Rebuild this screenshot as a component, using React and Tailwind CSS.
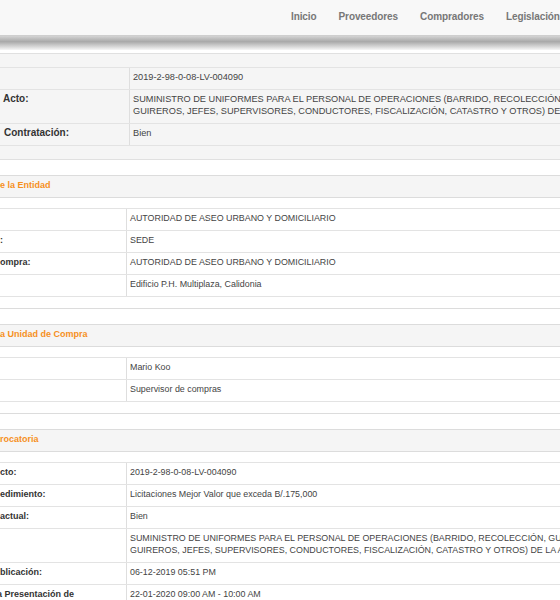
import React from "react";

const LONG1 =
  "SUMINISTRO DE UNIFORMES PARA EL PERSONAL DE OPERACIONES (BARRIDO, RECOLECCIÓN, GUARDIAS,";
const LONG2 =
  "GUIREROS, JEFES, SUPERVISORES, CONDUCTORES, FISCALIZACIÓN, CATASTRO Y OTROS) DE LA AAUD.";

function Row({
  label,
  labelPad = "pl-0",
  value,
  lines,
  labelW = "w-[127px]",
  valuePad = "pl-[3px]",
  labelSize = "text-[9px]",
  valueSize = "text-[8.9px]",
}) {
  return (
    <div className="flex border-t border-[#e3e3e3]">
      <div
        className={`${labelW} shrink-0 border-r border-[#dedede] pt-[3px] pb-[6px] ${labelPad} ${labelSize} leading-[12px] font-bold text-[#333] whitespace-nowrap overflow-hidden`}
      >
        {label || "\u00a0"}
      </div>
      <div
        className={`flex-1 min-w-0 pt-[3px] pb-[6px] ${valuePad} ${valueSize} leading-[12px] text-[#444] whitespace-nowrap overflow-hidden`}
      >
        {lines ? lines.map((l, i) => <div key={i}>{l}</div>) : value}
      </div>
    </div>
  );
}

function Panel({ title, children }) {
  return (
    <div className="border-t border-b border-[#dcdcdc] mb-[15px]">
      <div className="h-[22px] pb-[1px] bg-[#f5f5f5] border-b border-[#dcdcdc] flex items-center text-[9px] font-bold text-[#f5901e] whitespace-nowrap">
        {title}
      </div>
      <div className="pt-[10px] pb-[11px] bg-white">
        <div className="border-b border-[#e3e3e3]">{children}</div>
      </div>
    </div>
  );
}

export default function App() {
  return (
    <div className="w-[560px] h-[600px] overflow-hidden bg-white font-['Liberation_Sans',Arial,sans-serif]">
      {/* Navbar */}
      <div className="h-[36px] pb-[3px] bg-[#f8f8f8] border-b border-[#cfcfcf] flex items-center pl-[280px] whitespace-nowrap">
        {["Inicio", "Proveedores", "Compradores", "Legislación"].map((t) => (
          <span key={t} className="px-[11px] text-[10px] font-bold text-[#777] tracking-[-0.1px]">
            {t}
          </span>
        ))}
      </div>
      <div className="h-[14px] bg-linear-to-b from-[#d4d4d4] via-[#a9a9a9] via-40% to-[#f7f7f7]" />
      <div className="h-[3px]" />

      {/* Section 1 */}
      <div className="border-t border-b border-[#e0e0e0] bg-[#f5f5f5] pt-[13px] pb-[13px] mb-[15px]">
        <div className="border-b border-[#e3e3e3]">
          <Row
            labelW="w-[130px]"
            labelSize="text-[10px]"
            valueSize="text-[9.2px]"
            value="2019-2-98-0-08-LV-004090"
          />
          <Row
            labelW="w-[130px]"
            labelSize="text-[10px]"
            valueSize="text-[9.2px]"
            label="Acto:"
            labelPad="pl-[3px]"
            lines={[LONG1, LONG2]}
          />
          <Row
            labelW="w-[130px]"
            labelSize="text-[10px]"
            valueSize="text-[9.2px]"
            label="Contratación:"
            labelPad="pl-[4px]"
            value="Bien"
          />
        </div>
      </div>

      <Panel title="e la Entidad">
        <Row value="AUTORIDAD DE ASEO URBANO Y DOMICILIARIO" />
        <Row label=":" value="SEDE" />
        <Row label="ompra:" value="AUTORIDAD DE ASEO URBANO Y DOMICILIARIO" />
        <Row value="Edificio P.H. Multiplaza, Calidonia" />
      </Panel>

      <Panel title="a Unidad de Compra">
        <Row value="Mario Koo" />
        <Row value="Supervisor de compras" />
      </Panel>

      <Panel title="rocatoria">
        <Row label="cto:" value="2019-2-98-0-08-LV-004090" />
        <Row label="edimiento:" value="Licitaciones Mejor Valor que exceda B/.175,000" />
        <Row label="actual:" value="Bien" />
        <Row lines={[LONG1, LONG2]} />
        <Row label="blicación:" value="06-12-2019 05:51 PM" />
        <Row
          label={<span className="-ml-[3px]">a Presentación de</span>}
          value="22-01-2020 09:00 AM - 10:00 AM"
        />
      </Panel>
    </div>
  );
}
